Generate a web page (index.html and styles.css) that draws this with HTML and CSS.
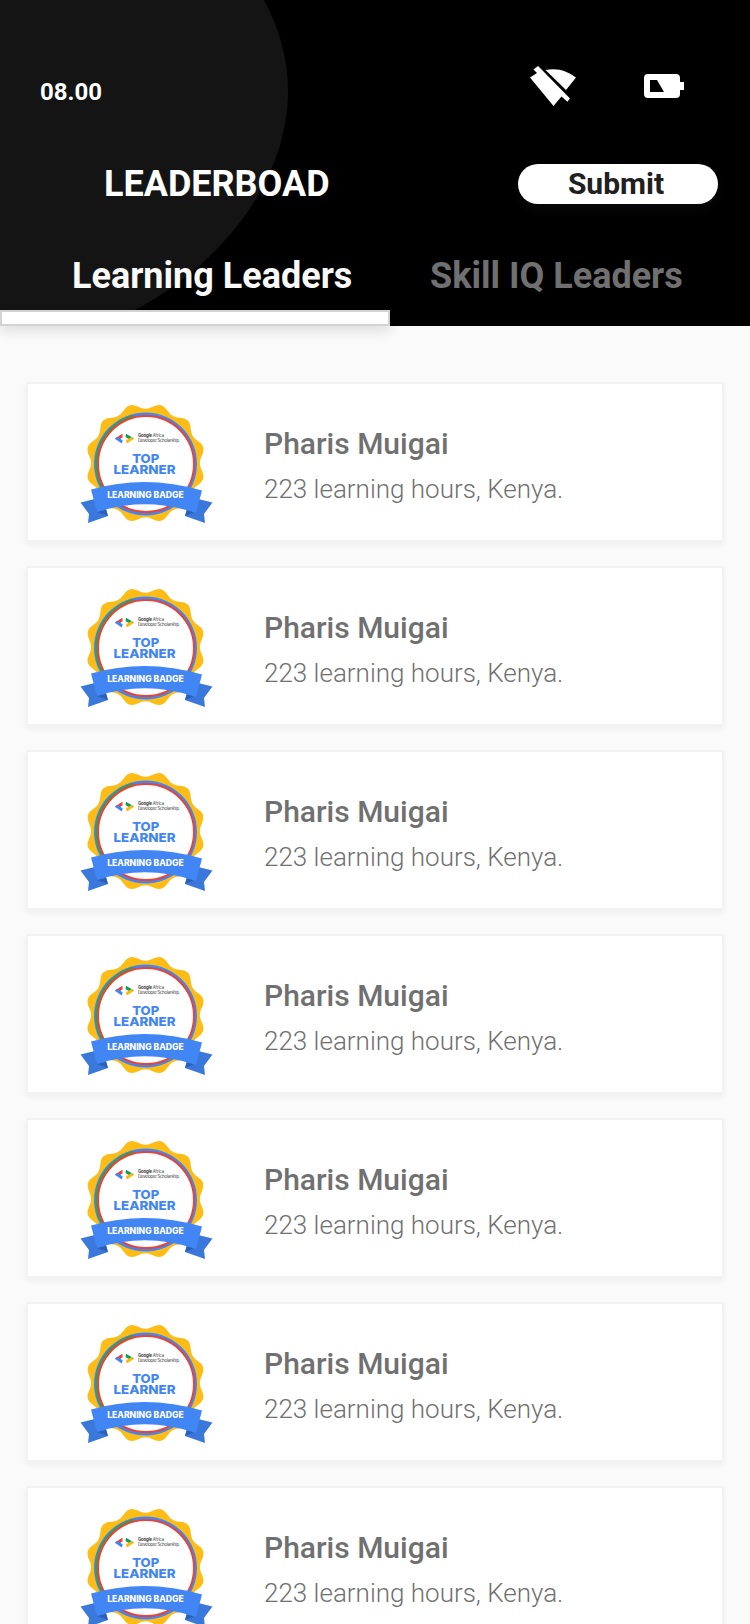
FILE: index.html
```
<!DOCTYPE html>
<html lang="en">
<head>
<meta charset="utf-8">
<title>Leaderboard</title>
<link rel="stylesheet" href="styles.css">
</head>
<body>
<svg width="0" height="0" class="defs">
  <symbol id="badge" viewBox="0 0 170 170">
    <path transform="translate(85.500 83) scale(.965)" fill="#fdbd16" stroke="#fdbd16" stroke-width="3" stroke-linejoin="round" d="M8.200-57Q16.500-61.400 21.400-53.500Q26.300-45.600 35.600-45.300Q45-45 45.300-35.600Q45.600-26.300 53.500-21.400Q61.400-16.500 57-8.200Q52.600 0 57 8.200Q61.400 16.500 53.500 21.400Q45.600 26.300 45.300 35.600Q45 45 35.600 45.300Q26.300 45.600 21.400 53.500Q16.500 61.400 8.200 57Q0 52.600-8.200 57Q-16.500 61.400-21.400 53.500Q-26.300 45.600-35.600 45.300Q-45 45-45.300 35.600Q-45.600 26.300-53.500 21.400Q-61.400 16.500-57 8.200Q-52.600 0-57-8.200Q-61.400-16.500-53.500-21.400Q-45.600-26.300-45.300-35.600Q-45-45-35.600-45.300Q-26.300-45.600-21.400-53.500Q-16.500-61.400-8.200-57Q0-52.600 8.200-57Z"/>
    <circle cx="85.500" cy="84" r="51.500" fill="#4285f4"/>
    <path d="M74 36.500A49 49 0 0 0 48 115" fill="none" stroke="#34a04d" stroke-width="3.500"/>
    <circle cx="86" cy="84" r="48" fill="#fff" stroke="#ea4335" stroke-width="2"/>
    <path d="M20.500 122.500L43 117L48 136L28 143L29 134ZM152.500 122.500L130 117L125 136L145 143L144 134Z" fill="#3b78dc"/>
    <path d="M37 132L48 136L46 130ZM136 132L125 136L127 130Z" fill="#2b5fb8"/>
    <path d="M31 109.500Q86 94 142 110.500L136 133Q86 116 37 132Z" fill="#4285f4"/>
    <path d="M54.700 58.500L62.500 53.700V57.500L57.800 60.300Z" fill="#ea4335"/>
    <path d="M54.700 58.500L57.500 56.800L62.800 60.500L61.500 63.500Z" fill="#4285f4"/>
    <path d="M74 58.500L66 53.700L65.500 57L71 60.300Z" fill="#109d58"/>
    <path d="M74 58.500L71.500 57L65.800 60.500L67 63.500Z" fill="#fbbc05"/>
    <g class="badge-text">
      <text x="78" y="57.200" font-size="4.200" textLength="26" fill="#333"><tspan font-weight="700">Google</tspan> Africa</text>
      <text x="78" y="62.300" font-size="4.200" textLength="41" fill="#333">Developer Scholarship</text>
      <g font-weight="800">
        <text x="72.200" y="82.800" font-size="12" textLength="27" lengthAdjust="spacingAndGlyphs" fill="#4285f4">TOP</text>
        <text x="53.500" y="94.300" font-size="12" textLength="62" lengthAdjust="spacingAndGlyphs" fill="#4285f4">LEARNER</text>
        <text x="47.200" y="117.500" font-size="8.400" textLength="76.500" lengthAdjust="spacingAndGlyphs" fill="#fff">LEARNING BADGE</text>
      </g>
    </g>
  </symbol>
</svg>
<div class="screen">
  <header class="header">
    <svg class="backdrop" viewBox="0 0 300 310" width="300" height="310"><path d="M0 0H264C280 30 288 60 288 91C288 172 232 258 135 310H0Z" fill="#141414"/></svg>
    <div class="status">
      <span class="time">08.00</span>
      <svg class="wifi" viewBox="0 0 50 44" width="50" height="44" fill="#fff"><path d="M5.700 1.800L8.100 0L40 32.600L37.400 35.800L31.500 30.500L23.500 40L0 11.500L7 7L3.500 3.500ZM15.500 4C28 1.500 37 5 46 11.500L36 24Z"/></svg>
      <svg class="battery" viewBox="0 0 40 24" width="40" height="24"><path fill="#fff" fill-rule="evenodd" d="M4 0H32Q36 0 36 4V8H40V16H36V20Q36 24 32 24H4Q0 24 0 20V4Q0 0 4 0ZM6 6V18H20L13 6Z"/></svg>
    </div>
    <div class="titlebar"><h1>LEADERBOAD</h1><button>Submit</button></div>
    <nav class="tabs"><span class="tab active">Learning Leaders</span><span class="tab">Skill IQ Leaders</span></nav>
    <div class="indicator"></div>
  </header>
  <main class="list">
    <article class="card"><svg class="badge" width="170" height="170"><use href="#badge"/></svg><div class="info"><h2>Pharis Muigai</h2><p>223 learning hours, Kenya.</p></div></article>
    <article class="card"><svg class="badge" width="170" height="170"><use href="#badge"/></svg><div class="info"><h2>Pharis Muigai</h2><p>223 learning hours, Kenya.</p></div></article>
    <article class="card"><svg class="badge" width="170" height="170"><use href="#badge"/></svg><div class="info"><h2>Pharis Muigai</h2><p>223 learning hours, Kenya.</p></div></article>
    <article class="card"><svg class="badge" width="170" height="170"><use href="#badge"/></svg><div class="info"><h2>Pharis Muigai</h2><p>223 learning hours, Kenya.</p></div></article>
    <article class="card"><svg class="badge" width="170" height="170"><use href="#badge"/></svg><div class="info"><h2>Pharis Muigai</h2><p>223 learning hours, Kenya.</p></div></article>
    <article class="card"><svg class="badge" width="170" height="170"><use href="#badge"/></svg><div class="info"><h2>Pharis Muigai</h2><p>223 learning hours, Kenya.</p></div></article>
    <article class="card"><svg class="badge" width="170" height="170"><use href="#badge"/></svg><div class="info"><h2>Pharis Muigai</h2><p>223 learning hours, Kenya.</p></div></article>
  </main>
</div>
</body>
</html>
```
FILE: styles.css
```
* { box-sizing: border-box; }
body { margin: 0; background: #fafafa; font-family: Roboto, sans-serif; }
h1, h2, p { margin: 0; }
.defs { position: absolute; }
.screen { width: 750px; height: 1624px; overflow: hidden; }
.header { position: relative; height: 326px; background: #000; color: #fff; display: flex; flex-direction: column; }
.backdrop { position: absolute; left: 0; top: 0; }
.status, .titlebar, .tabs, .indicator { position: relative; }
.status { height: 124px; display: flex; align-items: flex-start; }
.time { padding-left: 40px; width: 530px; margin-top: 78px; font-size: 24px; line-height: 28px; font-weight: 700; }
.wifi { margin-top: 66px; }
.battery { margin: 74px 0 0 64px; }
.titlebar { height: 120px; padding: 0 32px 0 104px; display: flex; justify-content: space-between; align-items: center; }
h1 { font-size: 36px; line-height: 42px; font-weight: 700; }
button { width: 200px; height: 40px; padding: 0 4px 0 0; border: 0; border-radius: 20px; background: #fff; color: #202020; font: 700 30px/40px Roboto, sans-serif; box-shadow: 0 6px 12px rgba(255,255,255,.03); }
.tabs { height: 66px; padding: 11px 0 0 72px; display: flex; font-size: 36px; line-height: 42px; font-weight: 700; color: #707070; }
.tab { width: 358px; white-space: nowrap; flex: none; }
.active { color: #fafafa; }
.indicator { width: 390px; height: 16px; background: #fff; border: 2px solid #d3d3d3; box-shadow: 0 6px 12px rgba(0,0,0,.1); }
.list { padding: 56px 26px 0; display: flex; flex-direction: column; gap: 24px; }
.card { height: 160px; flex: none; display: flex; background: #fff; border: 2px solid #f2f2f2; box-shadow: 0 3px 6px rgba(0,0,0,.05); }
.badge { margin: -4px 0 0 32px; flex: none; }
.badge-text { font-family: Inter, sans-serif; }
.info { padding: 42px 0 0 34px; color: #707070; white-space: nowrap; }
h2 { font-size: 30px; line-height: 36px; font-weight: 500; }
p { margin-top: 11px; font-size: 26px; line-height: 32px; font-weight: 300; }
```
